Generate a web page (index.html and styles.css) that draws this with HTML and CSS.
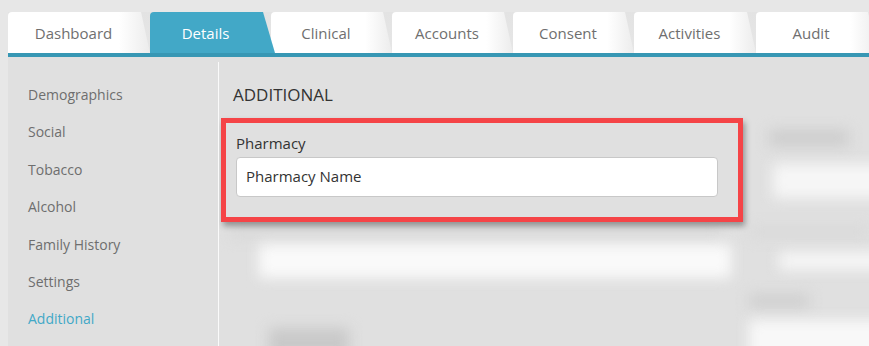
FILE: index.html
```html
<!DOCTYPE html>
<html>
<head>
<meta charset="utf-8">
<link rel="stylesheet" href="styles.css">
</head>
<body>
<div class="page">
  <nav class="tabs">
    <div class="tab tab-first">Dashboard</div>
    <div class="tab tab-active">Details</div>
    <div class="tab">Clinical</div>
    <div class="tab">Accounts</div>
    <div class="tab">Consent</div>
    <div class="tab tab-wide">Activities</div>
    <div class="tab">Audit</div>
  </nav>
  <div class="body">
    <aside class="sidebar">
      <ul class="menu">
        <li>Demographics</li>
        <li>Social</li>
        <li>Tobacco</li>
        <li>Alcohol</li>
        <li>Family History</li>
        <li>Settings</li>
        <li class="current">Additional</li>
      </ul>
    </aside>
    <main class="main">
      <h2 class="heading">ADDITIONAL</h2>
      <div class="row">
        <section class="highlight">
          <label class="label">Pharmacy</label>
          <div class="input">Pharmacy Name</div>
        </section>
        <div class="blur-col">
          <div class="blob blob-dark"></div>
          <div class="blob blob-white"></div>
        </div>
      </div>
      <div class="lower">
        <div class="lower-left">
          <div class="blob band-shade"></div>
          <div class="blob band-white"></div>
          <div class="blob blob-bottom"></div>
        </div>
        <div class="lower-right">
          <div class="blob r-shade"></div>
          <div class="blob r-white"></div>
          <div class="blob r-dark"></div>
          <div class="blob r-white2"></div>
        </div>
      </div>
    </main>
  </div>
</div>
</body>
</html>
```

FILE: styles.css
```css
* { box-sizing: border-box; }
html, body { margin: 0; padding: 0; }
body {
  width: 869px;
  height: 346px;
  overflow: hidden;
  background: #e7e7e7;
  font-family: "Open Sans", "Liberation Sans", sans-serif;
}
.page {
  padding-top: 12px;
  padding-left: 8px;
}
.tabs {
  display: flex;
  height: 45px;
  border-bottom: 4px solid #3797b4;
  overflow: hidden;
  background: linear-gradient(#e3e3e3, #e6e6e6);
}
.tab {
  flex: 0 0 121px;
  height: 41px;
  line-height: 41px;
  padding-top: 1px;
  font-size: 15px;
  color: #6f6f6f;
  text-align: center;
  padding-right: 11px;
  background: linear-gradient(to right, #ffffff 0%, #ffffff 78%, #ececec 100%);
  clip-path: polygon(0 0, calc(100% - 9px) 0, 100% 100%, 0 100%);
  border-top-left-radius: 4px;
}
.tab-first { flex-basis: 142px; }
.tab-wide { flex-basis: 122px; }
.tab-active {
  flex-basis: 125px;
  margin-right: -4px;
  position: relative;
  z-index: 2;
  background: #42a8c7;
  color: #ffffff;
  padding-right: 14px;
  clip-path: polygon(0 0, calc(100% - 12px) 0, 100% 100%, 0 100%);
}
.body {
  display: flex;
  height: 290px;
}
.sidebar {
  flex: 0 0 211px;
  background: #e0e0e0;
  padding-top: 5px;
}
.menu {
  list-style: none;
  margin: 0;
  padding: 14px 0 0 20px;
  border-right: 1px solid #fafafa;
  height: 100%;
}
.menu li {
  height: 37.4px;
  line-height: 37.4px;
  font-size: 14px;
  color: #6e6e6e;
}
.menu li.current { color: #42a8c7; }
.main {
  flex: 1;
  background: #e0e0e0;
  padding-left: 2px;
  overflow: hidden;
}
.heading {
  margin: 0;
  padding: 26px 0 0 12px;
  height: 61px;
  font-size: 17px;
  line-height: 24px;
  font-weight: 400;
  color: #333333;
}
.row {
  display: flex;
  height: 104px;
}
.highlight {
  flex: 0 0 522px;
  border: 5px solid #f54447;
  padding: 10px 20px 0 10px;
  box-shadow: 2px 4px 6px rgba(0, 0, 0, 0.35);
  position: relative;
  z-index: 1;
  background: #e0e0e0;
}
.label {
  display: block;
  font-size: 15px;
  line-height: 20px;
  height: 24px;
  color: #333333;
}
.input {
  height: 40px;
  background: #ffffff;
  border: 1px solid #c8c8c8;
  border-radius: 4px;
  padding-left: 9px;
  line-height: 37px;
  font-size: 15px;
  color: #333333;
}
.blob { filter: blur(7px); }
.blur-col {
  flex: 1;
  padding: 12px 0 0 18px;
}
.blob-dark {
  width: 80px;
  height: 16px;
  background: #cdcdcd;
  margin-left: 8px;
}
.blob-white {
  margin-top: 18px;
  height: 34px;
  background: #f6f6f6;
  margin-left: 12px;
  margin-right: -20px;
}
.lower {
  display: flex;
  height: 130px;
}
.lower-left {
  flex: 0 0 510px;
  padding: 4px 0 0 8px;
}
.band-shade {
  height: 12px;
  background: #d8d8d8;
  margin-right: 10px;
}
.band-white {
  margin-top: 6px;
  height: 34px;
  background: #fafafa;
  margin-left: 30px;
  margin-right: 0;
}
.blob-bottom {
  margin-top: 50px;
  margin-left: 40px;
  width: 80px;
  height: 30px;
  background: #c9c9c9;
}
.lower-right {
  flex: 1;
  padding: 4px 0 0 18px;
}
.r-shade {
  height: 12px;
  background: #d9d9d9;
}
.r-white {
  margin-top: 14px;
  margin-left: 30px;
  height: 18px;
  background: #f6f6f6;
  margin-right: -20px;
}
.r-dark {
  margin-top: 24px;
  width: 60px;
  height: 14px;
  background: #cfcfcf;
}
.r-white2 {
  margin-top: 12px;
  height: 40px;
  background: #f8f8f8;
  margin-right: -20px;
}
```
